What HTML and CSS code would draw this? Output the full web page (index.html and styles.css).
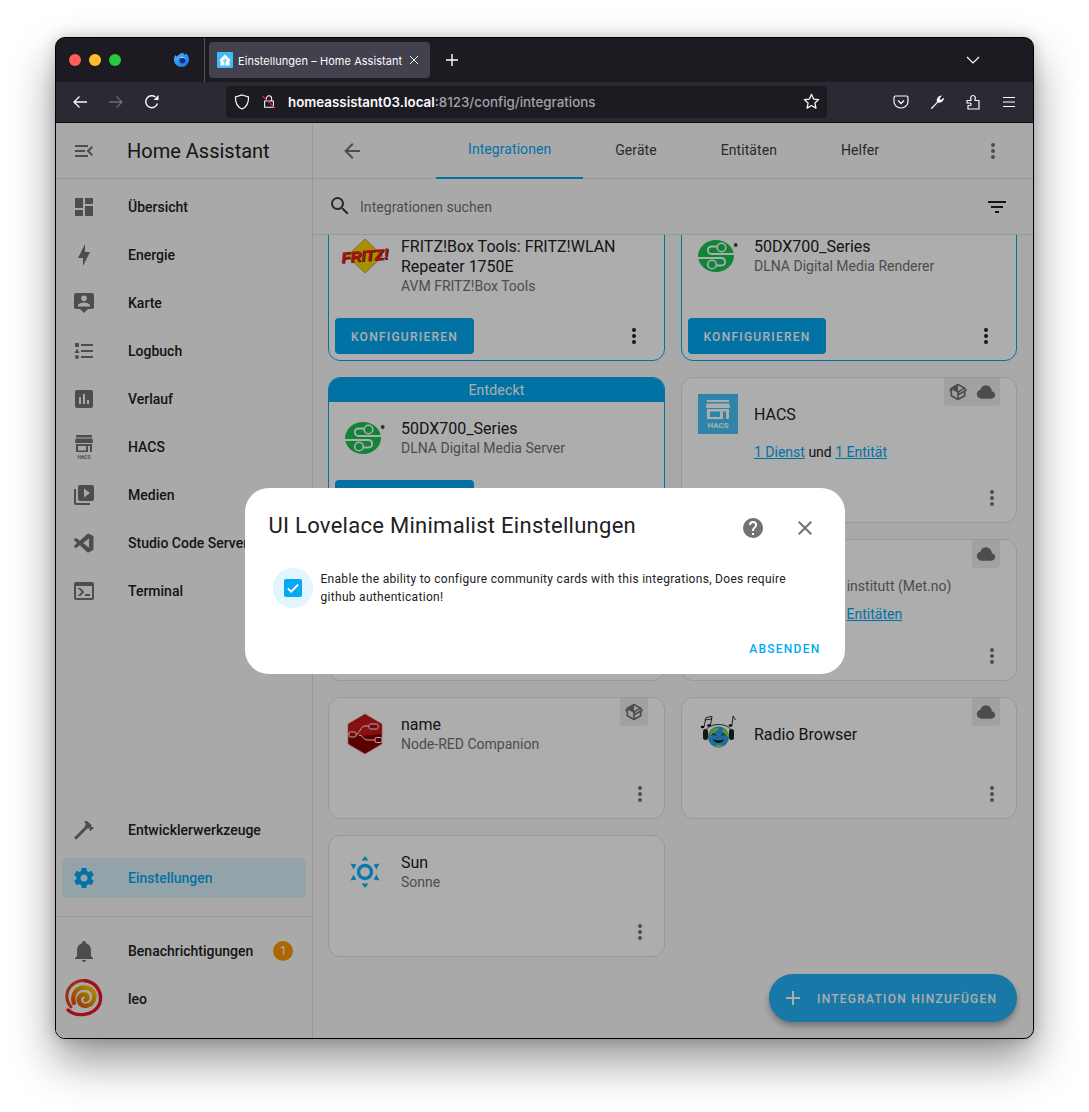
FILE: index.html
```html
<!DOCTYPE html>
<html lang="de">
<head>
<meta charset="utf-8">
<title>Einstellungen – Home Assistant</title>
<link rel="stylesheet" href="styles.css">
</head>
<body>
<svg class="sprite" aria-hidden="true">
  <symbol id="dots" viewBox="0 0 24 24"><path d="M12,16A2,2 0 0,1 14,18A2,2 0 0,1 12,20A2,2 0 0,1 10,18A2,2 0 0,1 12,16M12,10A2,2 0 0,1 14,12A2,2 0 0,1 12,14A2,2 0 0,1 10,12A2,2 0 0,1 12,10M12,4A2,2 0 0,1 14,6A2,2 0 0,1 12,8A2,2 0 0,1 10,6A2,2 0 0,1 12,4Z"/></symbol>
  <symbol id="cloud" viewBox="0 0 24 24"><path d="M6.5 20Q4.22 20 2.61 18.43 1 16.85 1 14.58 1 12.63 2.17 11.1 3.35 9.57 5.25 9.15 5.88 6.85 7.75 5.43 9.63 4 12 4 14.93 4 16.96 6.04 19 8.07 19 11 20.73 11.2 21.86 12.5 23 13.78 23 15.5 23 17.38 21.69 18.69 20.38 20 18.5 20Z"/></symbol>
  <symbol id="pkg" viewBox="0 0 24 24"><path d="M2,10.96C1.5,10.68 1.35,10.07 1.63,9.59L3.13,7C3.24,6.8 3.41,6.66 3.6,6.58L11.46,2.18C11.62,2.06 11.81,2 12,2C12.19,2 12.38,2.06 12.54,2.18L20.33,6.55C20.5,6.63 20.67,6.77 20.86,7L22.36,9.6C22.64,10.08 22.47,10.69 22,10.96L21,11.54V16.5C21,16.88 20.79,17.21 20.47,17.38L12.57,21.82C12.41,21.94 12.21,22 12,22C11.79,22 11.59,21.94 11.43,21.82L3.53,17.38C3.21,17.21 3,16.88 3,16.5V10.96C2.7,11.13 2.32,11.14 2,10.96M12,4.15V10.85L17.96,7.5L12,4.15M5,15.91L11,19.29V12.58L5,9.21V15.91M19,15.91V12.69L14,15.59C13.67,15.77 13.3,15.76 13,15.6V19.29L19,15.91M13.85,13.36L20.13,9.73L19.55,8.72L13.27,12.35L13.85,13.36Z"/></symbol>
  <symbol id="dlna" viewBox="0 0 40 40">
    <ellipse cx="18" cy="20" rx="18" ry="16" fill="#18c452"/>
    <path d="M37 18H14C8.500 18 8.500 10.500 14 10.500H20M0 22H23C28.500 22 28.500 29.500 23 29.500H17" fill="none" stroke="#fff" stroke-width="1.800"/>
    <circle cx="23.500" cy="11.500" r="4.300" fill="#18c452" stroke="#fff" stroke-width="1.600"/>
    <circle cx="14" cy="28.500" r="4.300" fill="#18c452" stroke="#fff" stroke-width="1.600"/>
    <circle cx="37.700" cy="9" r="1.900" fill="#444"/>
  </symbol>
</svg>

<div class="window">
  <div class="tabbar">
    <div class="lights"><span class="light red"></span><span class="light yellow"></span><span class="light green"></span></div>
    <svg class="ff" viewBox="0 0 16 16">
      <defs><linearGradient id="ffg" x1="0" y1="0" x2="1" y2="1"><stop offset="0" stop-color="#47bcff"/><stop offset="1" stop-color="#1170e0"/></linearGradient></defs>
      <path d="M9 .5c.6 1 .5 1.800 1.400 2.200.9-.3 1.400-.7 1.700-1.200 1.700 1.400 3 3.400 3 6a7.600 7.600 0 1 1-15.200 0c0-1.800.7-3.300 1.600-4.400.2.800.7 1.300 1.300 1.500C4.200 3 6.600 1.500 9 .5z" fill="url(#ffg)"/>
      <circle cx="8.500" cy="8.500" r="3" fill="#1c2a8c"/>
      <path d="M5.500 5.500C7 4 11 4.500 12.500 8 11 6.300 9 5.800 7.800 6.300z" fill="#8fdcff"/>
    </svg>
    <div class="tab">
      <svg class="favicon" viewBox="0 0 16 16"><rect width="16" height="16" rx="1" fill="#41bdf5"/><path d="M8 2.500 14 8.500H12.500V13.500H3.500V8.500H2z" fill="#fff"/><path d="M8 6.500V13.500M8 10.500 5.800 8.300M8 9.500l2.200-2" stroke="#41bdf5" fill="none" stroke-width="1"/></svg>
      <span class="tab-title">Einstellungen – Home Assistant</span>
      <svg class="tab-close" viewBox="0 0 12 12"><path d="M2 2 10 10M10 2 2 10" stroke="#e8e8ea" stroke-width="1"/></svg>
    </div>
    <svg class="newtab" viewBox="0 0 14 14"><path d="M7 1V13M1 7H13" stroke="#fbfbfe" stroke-width="1.400"/></svg>
    <svg class="chev" viewBox="0 0 14 8"><path d="M1 1 7 7 13 1" fill="none" stroke="#fbfbfe" stroke-width="1.200"/></svg>
  </div>

  <div class="toolbar">
    <svg class="tb tb-first" viewBox="0 0 16 16"><path d="M15 8H2M7.500 2.500 2 8l5.500 5.500" fill="none" stroke="#fbfbfe" stroke-width="1.300"/></svg>
    <svg class="tb tb-dim" viewBox="0 0 16 16"><path d="M1 8H14M8.500 2.500 14 8l-5.500 5.500" fill="none" stroke="#6d6c75" stroke-width="1.300"/></svg>
    <svg class="tb" viewBox="0 0 16 16"><path d="M13.500 9.500A6 6 0 1 1 11.500 3" fill="none" stroke="#fbfbfe" stroke-width="1.400"/><path d="M14.500 1v5h-5z" fill="#fbfbfe"/></svg>
    <div class="urlbar">
      <svg class="shield" viewBox="0 0 16 16"><path d="M8 1 14.500 3C14.800 9 12.500 13 8 15 3.500 13 1.200 9 1.500 3z" fill="none" stroke="#fbfbfe" stroke-width="1.200"/></svg>
      <svg class="lock" viewBox="0 0 16 16"><path d="M3 7.500H13V14.500H3zM5 7.500V4.500a3 3 0 0 1 6 0V7.500" fill="none" stroke="#fbfbfe" stroke-width="1.200"/><path d="M.5 1.500 15 15.500" stroke="#e22850" stroke-width="1.300"/></svg>
      <span class="url"><b class="host">homeassistant03.local</b>:8123/config/integrations</span>
      <svg class="star" viewBox="0 0 16 16"><path d="M8 1.300 10 5.700 14.800 6.200 11.200 9.400 12.200 14.200 8 11.700 3.800 14.200 4.800 9.400 1.200 6.200 6 5.700z" fill="none" stroke="#fbfbfe" stroke-width="1.200" stroke-linejoin="round"/></svg>
    </div>
    <div class="tb-right">
      <svg class="tb" viewBox="0 0 16 16"><path d="M2.500 2H13.500A1.500 1.500 0 0 1 15 3.500V7.500A7 6.500 0 0 1 1 7.500V3.500A1.500 1.500 0 0 1 2.500 2z" fill="none" stroke="#fbfbfe" stroke-width="1.200"/><path d="M5 6.500 8 9.500 11 6.500" fill="none" stroke="#fbfbfe" stroke-width="1.300"/></svg>
      <svg class="tb" viewBox="0 0 16 16"><path d="M1.500 14.500 8 8C7 5 9 1.500 13 1.500L10.500 4.500 12 6 15 3.500C15 7 12 9.500 9 8.500L3 15z" fill="#fbfbfe"/></svg>
      <svg class="tb" viewBox="0 0 16 16"><path d="M2 6.500H5.500C6 6.500 6.300 6 6 5.500 5 4 6 1.500 8 1.500S11 4 10 5.500C9.700 6 10 6.500 10.500 6.500H14V15H3V11.500H5C6.500 11.500 6.500 9 5 9H2z" fill="none" stroke="#fbfbfe" stroke-width="1.200" stroke-linejoin="round"/></svg>
      <svg class="tb" viewBox="0 0 16 16"><path d="M2 3.500H14M2 8H14M2 12.500H14" stroke="#fbfbfe" stroke-width="1.200"/></svg>
    </div>
  </div>

  <div class="app">
    <aside class="sidebar">
      <div class="side-head">
        <svg class="icon" viewBox="0 0 24 24"><path d="M21,15.61L19.59,17L14.58,12L19.59,7L21,8.39L17.44,12L21,15.61M3,6H16V8H3V6M3,13V11H13V13H3M3,18V16H16V18H3Z"/></svg>
        <span class="brand">Home Assistant</span>
      </div>
      <nav class="side-list">
        <a class="item"><svg class="icon" viewBox="0 0 24 24"><path d="M13,3V9H21V3M13,21H21V11H13M3,21H11V15H3M3,13H11V3H3V13Z"/></svg><span>Übersicht</span></a>
        <a class="item"><svg class="icon" viewBox="0 0 24 24"><path d="M11 15H6L13 1V9H18L11 23V15Z"/></svg><span>Energie</span></a>
        <a class="item"><svg class="icon" viewBox="0 0 24 24"><path fill-rule="evenodd" d="M4 2H20C21.100 2 22 2.900 22 4V16C22 17.100 21.100 18 20 18H16L12 22 8 18H4C2.900 18 2 17.100 2 16V4C2 2.900 2.900 2 4 2M12 4.500A2.800 2.800 0 1 0 12 10.100 2.800 2.800 0 0 0 12 4.500M18 15.500V14.500C18 12.500 14 11.500 12 11.500S6 12.500 6 14.500V15.500z"/></svg><span>Karte</span></a>
        <a class="item"><svg class="icon" viewBox="0 0 24 24"><path d="M5,9.5L7.5,14H2.5L5,9.5M3,4H7V8H3V4M5,20A2,2 0 0,0 7,18A2,2 0 0,0 5,16A2,2 0 0,0 3,18A2,2 0 0,0 5,20M9,5V7H21V5H9M9,19H21V17H9V19M9,13H21V11H9V13Z"/></svg><span>Logbuch</span></a>
        <a class="item"><svg class="icon" viewBox="0 0 24 24"><path d="M9 17H7V10H9V17M13 17H11V7H13V17M17 17H15V13H17V17M19 3H5C3.900 3 3 3.900 3 5V19C3 20.100 3.900 21 5 21H19C20.100 21 21 20.100 21 19V5C21 3.900 20.100 3 19 3Z"/></svg><span>Verlauf</span></a>
        <a class="item"><svg class="icon hacs-icon" viewBox="0 0 24 24"><path fill-rule="evenodd" d="M4 0H20V2.500H4zM3.500 3.500H20.500L21 8H3zM4 9H20V17H4zM6 11V15.500H14V11zM16 11V17H18V11z"/><text class="hacs-mini" x="12" y="23.500">HACS</text></svg><span>HACS</span></a>
        <a class="item"><svg class="icon" viewBox="0 0 24 24"><path d="M4,6H2V20A2,2 0 0,0 4,22H18V20H4V6M20,2H8A2,2 0 0,0 6,4V16A2,2 0 0,0 8,18H20A2,2 0 0,0 22,16V4A2,2 0 0,0 20,2M12,14.500V5.500L18,10L12,14.500Z"/></svg><span>Medien</span></a>
        <a class="item"><svg class="icon" viewBox="0 0 24 24"><path fill-rule="evenodd" d="M17,16.470V7.390L11,11.930M2.220,9.190C1.920,8.860 1.960,8.380 2.290,8.080L3.090,7.350C3.360,7.110 4.020,7 4.500,7.350L7.780,9.840L15.380,2.900C15.680,2.590 16.220,2.460 16.850,2.780L20.850,4.680C21.210,4.890 21.500,5.250 21.500,5.760V18.260C21.500,18.590 21.260,19.100 20.840,19.310L16.440,21.410C16.120,21.540 15.500,21.410 15.280,21.200L7.780,14.350L4.500,16.840C4.130,17.100 3.580,17 3.090,16.650L2.290,15.920C1.960,15.620 1.920,15.140 2.220,14.810L5,12L2.220,9.190Z"/></svg><span>Studio Code Server</span></a>
        <a class="item"><svg class="icon" viewBox="0 0 24 24"><path d="M20,19V7H4V19H20M20,3A2,2 0 0,1 22,5V19A2,2 0 0,1 20,21H4A2,2 0 0,1 2,19V5C2,3.890 2.900,3 4,3H20M13,17V15H18V17H13M9.580,13L5.570,9H8.400L11.700,12.300C12.090,12.690 12.090,13.330 11.700,13.720L8.420,17H5.590L9.580,13Z"/></svg><span>Terminal</span></a>
      </nav>
      <div class="side-tools">
        <a class="item"><svg class="icon" viewBox="0 0 24 24"><path d="M2 19.630L13.430 8.200L12.720 7.500L14.140 6.070L12 3.890C13.200 2.700 15.090 2.700 16.270 3.890L19.870 7.500L18.450 8.910H21.290L22 9.620L18.450 13.210L17.740 12.500V9.620L16.270 11.040L15.560 10.330L4.130 21.760L2 19.630Z"/></svg><span>Entwicklerwerkzeuge</span></a>
        <a class="item selected"><svg class="icon" viewBox="0 0 24 24"><path d="M12,15.500A3.500,3.500 0 0,1 8.500,12A3.500,3.500 0 0,1 12,8.500A3.500,3.500 0 0,1 15.500,12A3.500,3.500 0 0,1 12,15.500M19.430,12.970C19.470,12.650 19.500,12.330 19.500,12C19.500,11.670 19.470,11.340 19.430,11L21.540,9.370C21.730,9.220 21.780,8.950 21.660,8.730L19.660,5.270C19.540,5.050 19.270,4.960 19.050,5.050L16.560,6.050C16.040,5.660 15.500,5.320 14.870,5.070L14.500,2.420C14.460,2.180 14.250,2 14,2H10C9.750,2 9.540,2.180 9.500,2.420L9.130,5.070C8.500,5.320 7.960,5.660 7.440,6.050L4.950,5.050C4.730,4.960 4.460,5.050 4.340,5.270L2.340,8.730C2.210,8.950 2.270,9.220 2.460,9.370L4.570,11C4.530,11.340 4.500,11.670 4.500,12C4.500,12.330 4.530,12.650 4.570,12.970L2.460,14.630C2.270,14.780 2.210,15.050 2.340,15.270L4.340,18.730C4.460,18.950 4.730,19.030 4.950,18.950L7.440,17.940C7.960,18.340 8.500,18.680 9.130,18.930L9.500,21.580C9.540,21.820 9.750,22 10,22H14C14.250,22 14.460,21.820 14.500,21.580L14.870,18.930C15.500,18.670 16.040,18.340 16.560,17.940L19.050,18.950C19.270,19.030 19.540,18.950 19.660,18.730L21.660,15.270C21.780,15.050 21.730,14.780 21.540,14.630L19.430,12.970Z"/></svg><span>Einstellungen</span></a>
      </div>
      <div class="side-foot">
        <a class="item"><svg class="icon" viewBox="0 0 24 24"><path d="M21,19V20H3V19L5,17V11C5,7.900 7.030,5.170 10,4.290C10,4.190 10,4.100 10,4A2,2 0 0,1 12,2A2,2 0 0,1 14,4C14,4.100 14,4.190 14,4.290C16.970,5.170 19,7.900 19,11V17L21,19M14,21A2,2 0 0,1 12,23A2,2 0 0,1 10,21"/></svg><span>Benachrichtigungen</span><b class="count">1</b></a>
        <a class="item user">
          <svg class="avatar" viewBox="0 0 38 38">
            <defs><linearGradient id="ava" x1="0" y1="1" x2="1" y2="0"><stop offset="0" stop-color="#e8401a"/><stop offset=".6" stop-color="#f0a000"/><stop offset="1" stop-color="#ffd400"/></linearGradient></defs>
            <path d="M3 31C11 38.500 29 37 34.500 25 38.500 13 30 1.500 18 1.500" fill="none" stroke="#f0152a" stroke-width="3.400" stroke-linecap="round"/>
            <path d="M18 1.500C8 2 1 10 2 19 2.500 23 4 26 6 28" fill="none" stroke="#e8401a" stroke-width="3" stroke-linecap="round"/>
            <path d="M9 24C6 14 13 8 20 8.500 27 9 31 14 29 20 27 27 19 28.500 15.500 25 12 21 14 15 19.500 15.500 23 16 23.500 20 20.500 21" fill="none" stroke="url(#ava)" stroke-width="4.400" stroke-linecap="round"/>
          </svg>
          <span>leo</span>
        </a>
      </div>
    </aside>

    <main class="main">
      <header class="main-head">
        <svg class="icon back" viewBox="0 0 24 24"><path d="M20,11V13H8L13.500,18.500L12.080,19.920L4.160,12L12.080,4.080L13.500,5.500L8,11H20Z"/></svg>
        <div class="tabs">
          <a class="hatab active">Integrationen</a>
          <a class="hatab">Geräte</a>
          <a class="hatab">Entitäten</a>
          <a class="hatab">Helfer</a>
        </div>
        <svg class="icon head-dots"><use href="#dots"/></svg>
      </header>
      <div class="search">
        <svg class="icon mag" viewBox="0 0 24 24"><path d="M9.500,3A6.500,6.500 0 0,1 16,9.500C16,11.110 15.410,12.590 14.440,13.730L14.710,14H15.500L20.500,19L19,20.500L14,15.500V14.710L13.730,14.440C12.590,15.410 11.110,16 9.500,16A6.500,6.500 0 0,1 3,9.500A6.500,6.500 0 0,1 9.500,3M9.500,5C7,5 5,7 5,9.500C5,12 7,14 9.500,14C12,14 14,12 14,9.500C14,7 12,5 9.500,5Z"/></svg>
        <span class="placeholder">Integrationen suchen</span>
        <svg class="icon filter" viewBox="0 0 24 24"><path d="M6,13H18V11H6M3,6V8H21V6M10,18H14V16H10V18Z"/></svg>
      </div>

      <div class="scroller">
        <div class="grid">
          <article class="card attention">
            <div class="head">
              <svg class="logo" viewBox="0 0 40 40">
                <path d="M20 3 38 20 20 37 2 20z" fill="#f5d800" stroke="#444" stroke-width=".4"/>
                <g class="fritz-tilt">
                  <text class="fritz shadow" x="20.600" y="25.600">FRITZ!</text>
                  <text class="fritz" x="20" y="25">FRITZ!</text>
                </g>
              </svg>
              <div class="info"><div class="title">FRITZ!Box Tools: FRITZ!WLAN Repeater 1750E</div><div class="sub">AVM FRITZ!Box Tools</div></div>
            </div>
            <div class="actions"><button class="cfg">KONFIGURIEREN</button><svg class="icon dark"><use href="#dots"/></svg></div>
          </article>
          <article class="card attention">
            <div class="head">
              <svg class="logo"><use href="#dlna"/></svg>
              <div class="info"><div class="title">50DX700_Series</div><div class="sub">DLNA Digital Media Renderer</div></div>
            </div>
            <div class="actions"><button class="cfg cfg-r">KONFIGURIEREN</button><svg class="icon dark"><use href="#dots"/></svg></div>
          </article>

          <article class="card attention">
            <div class="banner">Entdeckt</div>
            <div class="head">
              <svg class="logo"><use href="#dlna"/></svg>
              <div class="info"><div class="title">50DX700_Series</div><div class="sub">DLNA Digital Media Server</div></div>
            </div>
            <div class="actions"><button class="cfg">KONFIGURIEREN</button><svg class="icon dark"><use href="#dots"/></svg></div>
          </article>
          <article class="card">
            <div class="badges"><svg class="badge-i"><use href="#pkg"/></svg><svg class="badge-i"><use href="#cloud"/></svg></div>
            <div class="head">
              <svg class="logo" viewBox="0 0 40 40">
                <rect width="40" height="40" fill="#44c4fa"/>
                <path fill="#fff" fill-rule="evenodd" d="M9 6H31V8H9zM8.500 9.500H31.500L32 14H8zM9 15H31V25H9zM12 17.500V23H22V17.500zM25 17.500V25H28V17.500z"/>
                <text class="hacs-big" x="20" y="34">HACS</text>
              </svg>
              <div class="info"><div class="title">HACS</div></div>
            </div>
            <div class="links"><a>1 Dienst</a> und <a>1 Entität</a></div>
            <div class="actions plain"><svg class="icon"><use href="#dots"/></svg></div>
          </article>

          <article class="card">
            <div class="actions plain"><svg class="icon"><use href="#dots"/></svg></div>
          </article>
          <article class="card">
            <div class="badges"><svg class="badge-i"><use href="#cloud"/></svg></div>
            <div class="head">
              <div class="logo"></div>
              <div class="info"><div class="title veil">Forecast</div><div class="sub"><span class="veil">Meteorologisk </span>institutt (Met.no)</div></div>
            </div>
            <div class="links"><span class="veil">1 Dienst und 2 </span><a>Entitäten</a></div>
            <div class="actions plain"><svg class="icon"><use href="#dots"/></svg></div>
          </article>

          <article class="card">
            <div class="badges"><svg class="badge-i"><use href="#pkg"/></svg></div>
            <div class="head">
              <svg class="logo" viewBox="0 0 40 40">
                <path d="M20 0 37 10V30L20 40 3 30V10z" fill="#850000" stroke="#e89090" stroke-width=".8"/>
                <path d="M20 1 36 10.500V20L4 23V10.500z" fill="#cc1818"/>
                <path d="M3 20H11C15 20 15 12 20 12H24M14 21C18 21 18 26 22 26H30" fill="none" stroke="#fff" stroke-width="1"/>
                <rect x="24" y="10" width="9" height="5" rx="1.500" fill="#a80c0c" stroke="#fff"/>
                <rect x="30" y="23.500" width="7" height="5" rx="1.500" fill="#850000" stroke="#fff"/>
                <rect x="4" y="18" width="7" height="5" rx="1.500" fill="#a80c0c" stroke="#fff"/>
              </svg>
              <div class="info"><div class="title">name</div><div class="sub">Node-RED Companion</div></div>
            </div>
            <div class="actions plain"><svg class="icon"><use href="#dots"/></svg></div>
          </article>
          <article class="card">
            <div class="badges"><svg class="badge-i"><use href="#cloud"/></svg></div>
            <div class="head">
              <svg class="logo" viewBox="0 0 40 40">
                <path d="M6 13 8 3.500 14 2.500 12.500 11M6.500 6 14 5M34 11 35 2 37.500 6" fill="none" stroke="#000" stroke-width=".8"/>
                <ellipse cx="4.500" cy="13" rx="1.800" ry="1.200"/><ellipse cx="11" cy="11.500" rx="1.800" ry="1.200"/><ellipse cx="32.500" cy="11.500" rx="1.800" ry="1.200"/>
                <path d="M7.500 18C9 8 32 8 33.500 18" fill="none" stroke="#222" stroke-width=".9"/>
                <rect x="5" y="15" width="5" height="11" rx="2.500" fill="#222"/>
                <rect x="31" y="15" width="5" height="11" rx="2.500" fill="#222"/>
                <circle cx="20.500" cy="23" r="10.500" fill="#2f9fe6"/>
                <path d="M11.500 20C14 14 18 13 21 14 20 18 15 17 13 24zM25 14C29 16 31 19 31 23 27 22 24 19 25 14zM17 32C18 30 23 30 25 32 23 34 19 34 17 32z" fill="#74e04e"/>
                <path d="M13.500 21.500C14.500 19.500 16.500 19.500 17.500 21.500M23.500 21.500C24.500 19.500 26.500 19.500 27.500 21.500" fill="none" stroke="#000" stroke-width="1"/>
                <path d="M15 25C17 30 24 30 26 25 23 27 18 27 15 25z" fill="#000"/>
              </svg>
              <div class="info"><div class="title">Radio Browser</div></div>
            </div>
            <div class="actions plain"><svg class="icon"><use href="#dots"/></svg></div>
          </article>

          <article class="card">
            <div class="head">
              <svg class="logo" viewBox="0 0 40 40">
                <circle cx="20" cy="20" r="6.500" fill="none" stroke="#12b2fa" stroke-width="3.400"/>
                <path d="M20 4 23.500 8.500H16.500zM20 36 23.500 31.500H16.500zM5.500 11.500 11.500 12.500 8.500 17.500zM34.500 11.500 28.500 12.500 31.500 17.500zM5.500 28.500 8.500 22.500 11.500 27.500zM34.500 28.500 31.500 22.500 28.500 27.500z" fill="#12b2fa"/>
              </svg>
              <div class="info"><div class="title">Sun</div><div class="sub">Sonne</div></div>
            </div>
            <div class="actions plain"><svg class="icon"><use href="#dots"/></svg></div>
          </article>
        </div>
      </div>

      <button class="fab">
        <svg class="fab-plus" viewBox="0 0 24 24"><path d="M19,13H13V19H11V13H5V11H11V5H13V11H19V13Z"/></svg>
        <span class="fab-text">INTEGRATION HINZUFÜGEN</span>
      </button>
    </main>

    <div class="overlay">
      <section class="dialog">
        <div class="dlg-head">
          <h2 class="dlg-title">UI Lovelace Minimalist Einstellungen</h2>
          <svg class="icon dlg-help" viewBox="0 0 24 24"><path d="M15.070,11.250L14.170,12.170C13.450,12.890 13,13.500 13,15H11V14.500C11,13.390 11.450,12.390 12.170,11.670L13.410,10.410C13.780,10.050 14,9.550 14,9C14,7.890 13.100,7 12,7A2,2 0 0,0 10,9H8A4,4 0 0,1 12,5A4,4 0 0,1 16,9C16,9.880 15.640,10.670 15.070,11.250M13,19H11V17H13M12,2A10,10 0 0,0 2,12A10,10 0 0,0 12,22C17.530,22 22,17.500 22,12C22,6.470 17.500,2 12,2Z"/></svg>
          <svg class="icon dlg-close" viewBox="0 0 24 24"><path d="M19,6.410L17.590,5L12,10.590L6.410,5L5,6.410L10.590,12L5,17.590L6.410,19L12,13.410L17.590,19L19,17.590L13.410,12L19,6.410Z"/></svg>
        </div>
        <div class="dlg-body">
          <span class="ripple"><svg class="check" viewBox="0 0 18 18"><rect width="18" height="18" rx="2" fill="#03a9f4"/><path d="M3.800 9.300 7.200 12.700 14.200 5.500" fill="none" stroke="#fff" stroke-width="1.800"/></svg></span>
          <p class="dlg-label">Enable the ability to configure community cards with this integrations, Does require github authentication!</p>
        </div>
        <div class="dlg-actions"><a class="submit">ABSENDEN</a></div>
      </section>
    </div>
  </div>
</div>
</body>
</html>
```

FILE: styles.css
```css
* { box-sizing: border-box; }
html, body { margin: 0; height: 1112px; overflow: hidden; background: #fff; }
body { padding: 37px 55px 0; font-family: Roboto, "Liberation Sans", sans-serif; color: #212121; }
.sprite { display: none; }
p, h2 { margin: 0; }
.veil { visibility: hidden; }

.window {
  width: 979px; height: 1002px; border: 1px solid #000; border-radius: 10px; overflow: hidden;
  display: flex; flex-direction: column; background: #1c1b22;
  box-shadow: 0 22px 45px rgba(0,0,0,.42), 0 0 14px rgba(0,0,0,.18);
}

/* browser chrome */
.tabbar { height: 44px; flex: none; display: flex; align-items: center; background: #1c1b22; position: relative; }
.lights { display: flex; gap: 8px; margin-left: 13px; width: 106px; }
.light { width: 12px; height: 12px; border-radius: 50%; }
.red { background: #ff5f57; } .yellow { background: #febc2e; } .green { background: #28c840; }
.ff { width: 16px; height: 16px; margin-right: 19px; margin-left: -1px; }
.tab {
  width: 221px; height: 36px; display: flex; align-items: center; gap: 5px; padding-left: 8px;
  background: #42414d; border-radius: 4px; position: relative;
}
.tab::before { content: ""; position: absolute; left: -5px; top: -4px; width: 1px; height: 44px; background: #55545c; }
.favicon { width: 16px; height: 16px; flex: none; }
.tab-title { font: 400 11px/16px Inter, "Liberation Sans", sans-serif; margin-top: 1px; color: #fbfbfe; white-space: nowrap; width: 165px; letter-spacing: .05px; }
.tab-close { width: 12px; height: 12px; }
.newtab { width: 14px; height: 14px; margin-left: 15px; }
.chev { width: 14px; height: 8px; margin-left: 507px; }

.toolbar { height: 41px; flex: none; display: flex; align-items: center; background: #2b2a33; border-bottom: 1px solid #0c0c0d; padding-bottom: 1px; }
.tb { width: 16px; height: 16px; flex: none; }
.tb-first { margin-left: 16px; }
.tb-dim { margin: 0 20px; }
.urlbar { width: 601px; height: 32px; margin-left: 66px; background: #1c1b22; border-radius: 4px; display: flex; align-items: center; padding: 0 8px; }
.shield { width: 16px; height: 16px; }
.lock { width: 14px; height: 15px; margin-left: 12px; }
.url { margin: 1px 0 0 12px; flex: 1; font: 500 13.350px/20px Inter, "Liberation Sans", sans-serif; color: #a3a2a8; white-space: nowrap; }
.host { font-weight: 600; color: #fbfbfe; }
.star { width: 17px; height: 17px; margin-right: -1px; }
.tb-right { display: flex; gap: 20px; margin-left: 66px; }

/* app */
.app { position: relative; flex: 1; min-height: 0; display: flex; background: #fafafa; }
.icon { width: 24px; height: 24px; fill: #727272; flex: none; display: block; }
.icon.dark { fill: #212121; }
.hacs-icon { overflow: visible; }

.sidebar { width: 257px; flex: none; border-right: 1px solid #e0e0e0; display: flex; flex-direction: column; background: #fafafa; }
.side-head { height: 56px; flex: none; display: flex; align-items: center; gap: 31px; padding-left: 16px; border-bottom: 1px solid #e0e0e0; }
.brand { font-size: 20px; font-weight: 400; white-space: nowrap; }
.side-list { display: flex; flex-direction: column; gap: 8px; padding-top: 8px; flex: 1; }
.side-tools { display: flex; flex-direction: column; gap: 8px; padding-bottom: 18px; border-bottom: 1px solid #e0e0e0; }
.side-foot { display: flex; flex-direction: column; gap: 8px; padding: 14px 0 19px; }
.item {
  height: 40px; margin: 0 6px; padding-left: 10px; display: flex; align-items: center; gap: 32px;
  border-radius: 4px; font-size: 14px; font-weight: 500; white-space: nowrap; color: #212121;
}
.selected { background: rgba(3,169,244,.12); color: #03a9f4; }
.selected .icon { fill: #03a9f4; }
.hacs-mini { font: 700 5px Roboto, sans-serif; text-anchor: middle; }
.count { flex: none; margin-left: -12px; width: 20px; height: 20px; border-radius: 50%; background: #ff9800; color: #fff; font-size: 12px; font-weight: 400; line-height: 20px; text-align: center; }
.user { padding-left: 3px; gap: 25px; }
.avatar { width: 38px; height: 38px; flex: none; margin-top: -2px; }

.main { flex: 1; min-width: 0; display: flex; flex-direction: column; position: relative; }
.main-head { height: 56px; flex: none; display: flex; align-items: stretch; border-bottom: 1px solid #e0e0e0; }
.back { margin: 16px 72px 0 27px; }
.tabs { display: flex; flex: 1; }
.hatab { padding: 0 32px; height: 56px; line-height: 54px; font-size: 14px; font-weight: 400; letter-spacing: .07px; color: #3d3d3d; white-space: nowrap; }
.hatab.active { line-height: 52px; color: #03a9f4; border-bottom: 2px solid #03a9f4; }
.head-dots { margin: 16px 28px 0 0; }
.search { height: 56px; flex: none; display: flex; align-items: center; padding: 0 24px 1px 15px; border-bottom: 1px solid #e0e0e0; }
.mag { fill: #000; opacity: .75; margin-right: 8px; }
.placeholder { flex: 1; margin-top: 2px; font-size: 14px; color: #727272; letter-spacing: .05px; }
.filter { fill: #212121; margin-top: 2px; }

.scroller { flex: 1; min-height: 0; overflow: hidden; }
.grid {
  margin-top: -16px; padding: 0 16px 0 15px; display: grid;
  grid-template-columns: 337px 336px; grid-template-rows: 142px 146px 142px 122px 122px; gap: 16px;
}
.card { position: relative; background: #fff; border: 1px solid #e0e0e0; border-radius: 12px; display: flex; flex-direction: column; overflow: hidden; }
.card.attention { border-color: #03a9f4; }
.banner { height: 25px; flex: none; margin: -1px -1px 0; background: #03a9f4; color: #fff; font-size: 14px; line-height: 26px; text-align: center; letter-spacing: .2px; }
.head { display: flex; align-items: flex-start; gap: 16px; padding: 16px 16px 0; }
.logo { width: 40px; height: 40px; flex: none; overflow: visible; }
.info { min-height: 40px; display: flex; flex-direction: column; justify-content: center; }
.title { font-size: 16px; line-height: 20px; padding-top: 1px; margin-bottom: -1px; color: #212121; }
.sub { font-size: 14px; line-height: 20px; color: #727272; }
.links { padding: 8px 0 0 72px; font-size: 14px; line-height: 20px; }
.links a { color: #03a9f4; text-decoration: underline; }
.actions { margin-top: auto; display: flex; align-items: center; justify-content: space-between; padding: 0 18px 6px 6px; }
.actions.plain { justify-content: flex-end; padding: 0 12px 12px 0; }
.cfg { width: 139px; height: 36px; border: 0; padding: 2px 0 0; border-radius: 4px; background: #03a9f4; color: #fff; font: 500 12px Roboto, sans-serif; letter-spacing: 1.25px; }
.cfg-r { width: 138px; }
.badges { position: absolute; top: 0; right: 16px; display: flex; gap: 8px; padding: 4px; height: 28px; background: #ededed; border-radius: 0 0 4px 4px; }
.badge-i { width: 20px; height: 20px; fill: #727272; display: block; }
.fritz-tilt { transform: rotate(-5deg); transform-origin: 20px 20px; }
.fritz { font: italic 900 15px "Liberation Sans", sans-serif; text-anchor: middle; fill: #ff1a1a; stroke: #ff1a1a; stroke-width: .3; }
.fritz.shadow { fill: #000; stroke: #000; }
.hacs-big { font: 700 8px Roboto, sans-serif; fill: #fff; text-anchor: middle; }

.fab {
  position: absolute; right: 16px; bottom: 16px; width: 248px; height: 48px; border: 0; border-radius: 24px; padding: 0 0 0 12px;
  display: flex; align-items: center; gap: 12px; background: #24b2f6; color: #fff;
  font: 500 12px Roboto, sans-serif; letter-spacing: 1.25px; box-shadow: 0 3px 5px rgba(0,0,0,.2), 0 6px 10px rgba(0,0,0,.14);
}
.fab-plus { width: 24px; height: 24px; fill: #fff; }
.fab-text { padding-top: 2px; }

/* dialog */
.overlay { position: absolute; inset: 0; background: rgba(0,0,0,.32); display: flex; align-items: center; justify-content: center; }
.dialog { width: 600px; height: 186px; background: #fff; border-radius: 24px; display: flex; flex-direction: column; }
.dlg-head { height: 76px; flex: none; display: flex; align-items: center; padding: 4px 28px 0 24px; }
.dlg-title { flex: 1; margin-top: -4px; font-size: 22px; font-weight: 400; line-height: 28px; letter-spacing: .28px; color: #212121; white-space: nowrap; }
.dlg-close { margin-left: 28px; }
.dlg-body { display: flex; align-items: center; gap: 8px; padding: 4px 32px 0 28px; }
.ripple { width: 40px; height: 40px; flex: none; border-radius: 50%; background: #e1f5fe; display: flex; align-items: center; justify-content: center; }
.check { width: 18px; height: 18px; display: block; }
.dlg-label { font-size: 12px; line-height: 18px; color: #212121; letter-spacing: .3px; }
.dlg-actions { margin-top: auto; padding: 0 24px 17px 0; display: flex; justify-content: flex-end; }
.submit { font-size: 12px; font-weight: 500; line-height: 16px; letter-spacing: 1.25px; color: #03a9f4; }
```
